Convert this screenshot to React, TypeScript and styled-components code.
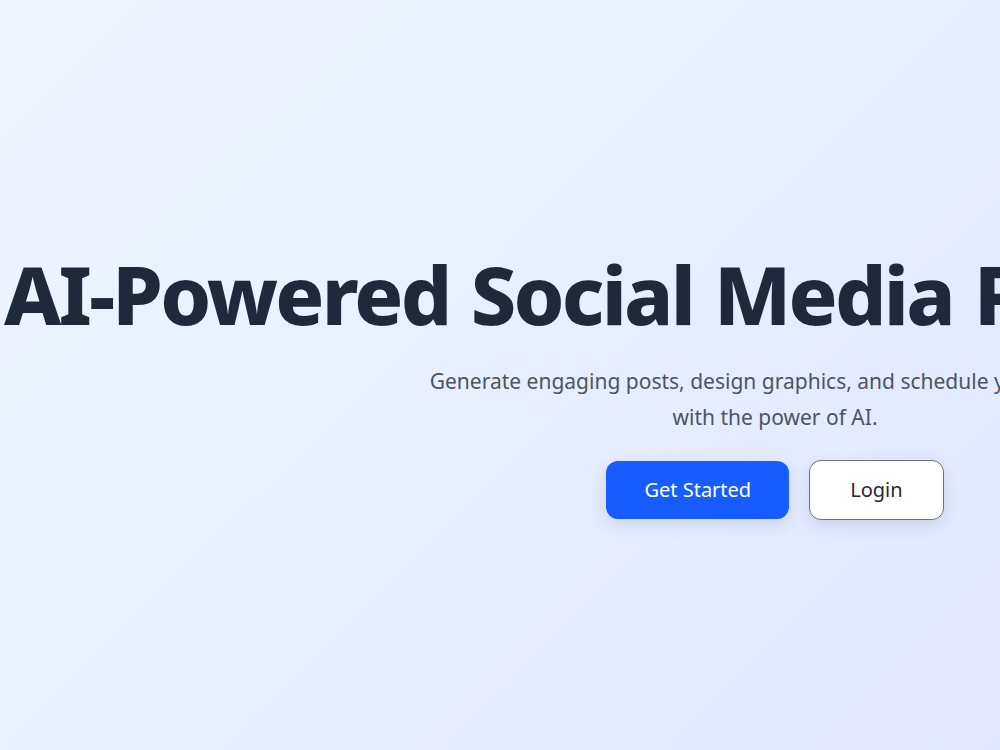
import React from "react";
import styled, { createGlobalStyle } from "styled-components";

const GlobalStyle = createGlobalStyle`
  html, body {
    margin: 0;
    padding: 0;
  }
  body {
    font-family: "Noto Sans", "Open Sans", Arial, sans-serif;
    background: linear-gradient(135deg, #eff6ff 0%, #e0e7ff 100%);
    min-height: 100vh;
  }
  * {
    box-sizing: border-box;
  }
`;

const Page = styled.main`
  min-height: 100vh;
  display: flex;
  align-items: center;
  padding-top: 15px;
  overflow: hidden;
`;

const Hero = styled.section`
  flex-shrink: 0;
  width: 1550px;
  display: flex;
  flex-direction: column;
  align-items: center;
`;

const Title = styled.h1`
  align-self: stretch;
  margin: 0;
  padding-left: 4px;
  font-size: 81px;
  line-height: 97px;
  font-weight: 800;
  letter-spacing: -2.8px;
  word-spacing: 3px;
  color: #1e293b;
  white-space: nowrap;
  text-align: left;
`;

const Subtitle = styled.p`
  margin: 21px 0 0;
  max-width: 700px;
  font-size: 21px;
  line-height: 36px;
  color: #4b5563;
  text-align: center;
`;

const Actions = styled.div`
  margin-top: 25px;
  display: flex;
  align-items: center;
  gap: 20px;
`;

const Button = styled.button<{ $primary?: boolean }>`
  font-family: inherit;
  font-size: 20px;
  line-height: 26px;
  padding: ${(p) => (p.$primary ? "16px 38px" : "16px 40px")};
  border-radius: 12px;
  cursor: pointer;
  border: ${(p) => (p.$primary ? "none" : "1px solid #71717a")};
  background: ${(p) => (p.$primary ? "#175cff" : "#ffffff")};
  color: ${(p) => (p.$primary ? "#ffffff" : "#1f2937")};
  box-shadow: 0 6px 16px rgba(30, 41, 80, 0.12);
`;

export default function App() {
  return (
    <>
      <GlobalStyle />
      <Page>
        <Hero>
          <Title>AI-Powered Social Media Platform</Title>
          <Subtitle>
            Generate engaging posts, design graphics, and schedule your content with the
            power of AI.
          </Subtitle>
          <Actions>
            <Button $primary>Get Started</Button>
            <Button>Login</Button>
          </Actions>
        </Hero>
      </Page>
    </>
  );
}
